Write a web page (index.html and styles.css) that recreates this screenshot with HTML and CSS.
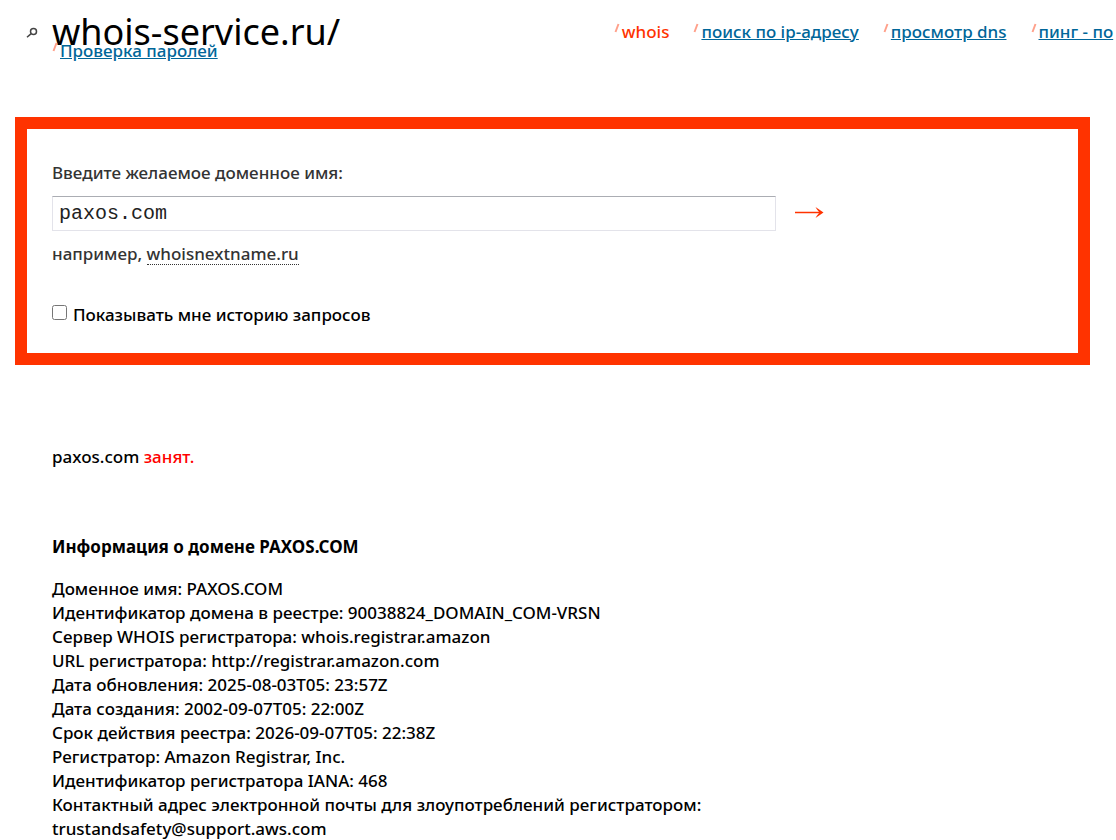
FILE: index.html
```html
<!DOCTYPE html>
<html lang="ru">
<head>
<meta charset="utf-8">
<meta name="viewport" content="width=device-width, initial-scale=1">
<title>whois-service.ru</title>
<link rel="stylesheet" href="styles.css">
</head>
<body>
<header class="header">
  <div class="brand">
    <svg class="brand-icon" viewBox="0 0 12 12" aria-hidden="true"><circle cx="7.500" cy="4.500" r="3"/><path d="M5.200 6.600 1 10.300"/></svg>
    <h1 class="brand-name">whois-service.ru/</h1>
    <a class="nav-link extra-link" href="#"><svg class="tick" viewBox="0 0 6 10" aria-hidden="true"><path d="M4.500 1 1.500 9"/></svg><span>Проверка паролей</span></a>
  </div>
  <nav class="nav">
    <a class="nav-link current" href="#"><svg class="tick" viewBox="0 0 6 10" aria-hidden="true"><path d="M4.500 1 1.500 9"/></svg><span>whois</span></a>
    <a class="nav-link" href="#"><svg class="tick" viewBox="0 0 6 10" aria-hidden="true"><path d="M4.500 1 1.500 9"/></svg><span>поиск по ip-адресу</span></a>
    <a class="nav-link" href="#"><svg class="tick" viewBox="0 0 6 10" aria-hidden="true"><path d="M4.500 1 1.500 9"/></svg><span>просмотр dns</span></a>
    <a class="nav-link" href="#"><svg class="tick" viewBox="0 0 6 10" aria-hidden="true"><path d="M4.500 1 1.500 9"/></svg><span>пинг - по</span></a>
  </nav>
</header>
<main>
  <form class="search">
    <label class="search-label" for="domain">Введите желаемое доменное имя:</label>
    <div class="search-row">
      <input class="search-input" id="domain" type="text" value="paxos.com">
      <button class="search-button" type="button" aria-label="Проверить"><svg class="arrow" viewBox="0 0 30 14" aria-hidden="true"><path class="arrow-line" d="M1 5.500H27"/><path class="arrow-head" d="M21.500 0 29.500 5.500 21.500 11 23 8.500 25.500 5.500 23 2.500Z"/></svg></button>
    </div>
    <p class="example">например, <span class="example-name">whoisnextname.ru</span></p>
    <div class="history">
      <input class="history-box" id="history" type="checkbox">
      <label for="history">Показывать мне историю запросов</label>
    </div>
  </form>
  <section class="result">
    <p class="status">paxos.com <span class="taken">занят.</span></p>
    <h2 class="info-title">Информация о домене PAXOS.COM</h2>
    <p class="info">Доменное имя: PAXOS.COM<br>
Идентификатор домена в реестре: 90038824_DOMAIN_COM-VRSN<br>
Сервер WHOIS регистратора: whois.registrar.amazon<br>
URL регистратора: http://registrar.amazon.com<br>
Дата обновления: 2025-08-03T05: 23:57Z<br>
Дата создания: 2002-09-07T05: 22:00Z<br>
Срок действия реестра: 2026-09-07T05: 22:38Z<br>
Регистратор: Amazon Registrar, Inc.<br>
Идентификатор регистратора IANA: 468<br>
Контактный адрес электронной почты для злоупотреблений регистратором:<br>
trustandsafety@support.aws.com</p>
  </section>
</main>
</body>
</html>
```
FILE: styles.css
```css
* {
  box-sizing: border-box;
}

body {
  margin: 0;
  background: #fff;
  color: #000;
  font-family: "Trebuchet MS", "Noto Sans", "Open Sans", sans-serif;
  font-size: 17px;
  font-weight: 500;
  line-height: 24px;
  overflow-x: hidden;
}

h1, h2, p {
  margin: 0;
}

.header {
  display: grid;
  grid-template-columns: 55% 45%;
  height: 117px;
  padding-top: 8px;
}

.brand {
  position: relative;
  display: flex;
  align-items: flex-start;
  gap: 14px;
  padding-left: 26px;
}

.brand-icon {
  width: 12px;
  height: 12px;
  margin-top: 19px;
  fill: none;
  stroke: #444;
  stroke-width: 1.5;
}

.brand-name {
  font-size: 36px;
  font-weight: 400;
  line-height: 48px;
}

.nav {
  display: flex;
  gap: 24px;
  padding-top: 12px;
  overflow: hidden;
}

.nav-link {
  display: flex;
  flex: none;
  gap: 2px;
  color: #069;
  text-decoration: none;
  white-space: nowrap;
}

.nav-link span {
  text-decoration: underline;
}

.nav-link.current {
  color: #f30;
}

.nav-link.current span {
  text-decoration: none;
}

.extra-link {
  position: absolute;
  top: 31px;
  left: 52px;
}

.tick {
  width: 6px;
  height: 10px;
  margin-top: 3px;
  fill: none;
  stroke: #ffa08a;
  stroke-width: 2;
}

.search {
  margin: 0 26px 0 15px;
  padding: 32px 25px 26px;
  border: 12px solid #f30;
}

.search-label {
  display: block;
  color: #333;
}

.search-row {
  display: grid;
  grid-template-columns: 724fr 277fr;
  align-items: center;
  margin-top: 11px;
}

.search-input {
  width: 100%;
  height: 35px;
  padding: 0 6px;
  border: 1px solid #e3e3ea;
  border-top-color: #abadb3;
  font-family: "Courier New", "Liberation Mono", monospace;
  font-size: 20px;
  color: #222;
}

.search-button {
  display: flex;
  justify-self: start;
  margin-left: 18px;
  padding: 0;
  border: 0;
  background: none;
}

.arrow {
  width: 30px;
  height: 14px;
}

.arrow-line {
  fill: none;
  stroke: #f30;
  stroke-width: 1.5;
}

.arrow-head {
  fill: #f30;
}

.example {
  margin-top: 11px;
  color: #333;
}

.example-name {
  display: inline-block;
  line-height: 20px;
  border-bottom: 1px dotted #333;
}

.history {
  display: flex;
  align-items: flex-start;
  gap: 6px;
  margin-top: 37px;
}

.history-box {
  width: 15px;
  height: 15px;
  margin: 2px 0 0;
}

.result {
  padding: 80px 52px 0;
}

.taken {
  color: #f00;
}

.info-title {
  margin-top: 66px;
  font-size: 17px;
  font-weight: 700;
  line-height: 24px;
}

.info {
  margin-top: 18px;
}
```
